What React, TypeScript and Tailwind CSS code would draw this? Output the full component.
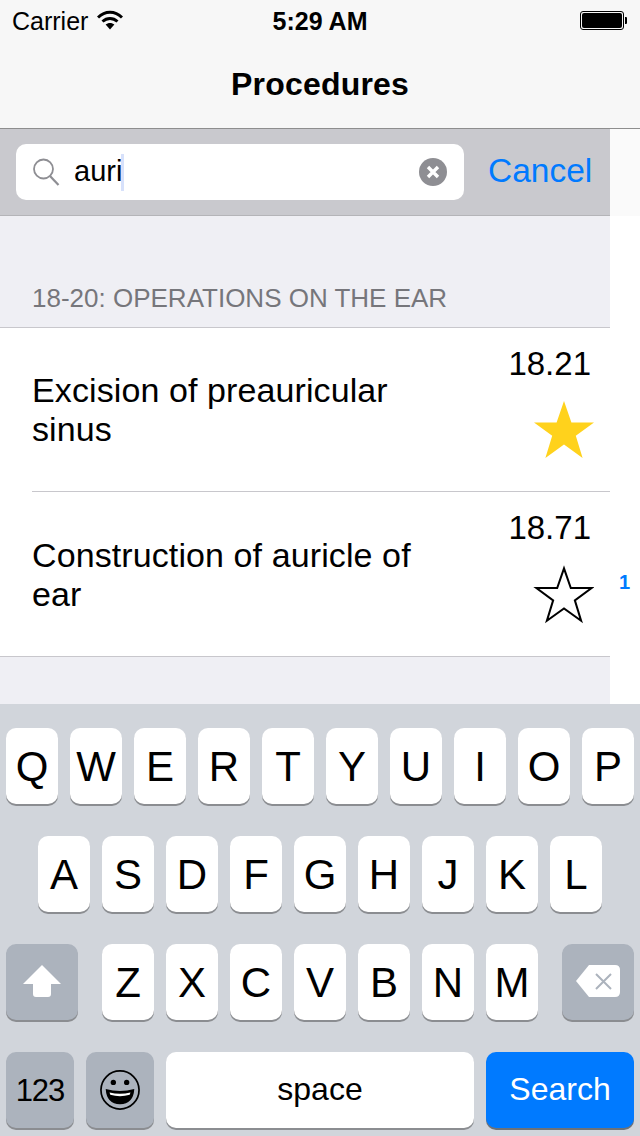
function Key({ label, className = "" }: { label: string; className?: string }) {
  return (
    <div className={`flex h-[76px] w-[52px] items-center justify-center rounded-[10px] bg-white pt-[2px] text-[42px] leading-none text-black shadow-[0_2px_0_#8b8d91] ${className}`}>
      {label}
    </div>
  );
}

function Star({ filled }: { filled: boolean }) {
  const points = "31,2 38.4,23.4 61,23.4 42.8,36.8 49.6,59 31,45.6 12.4,59 19.2,36.8 1,23.4 23.6,23.4";
  return (
    <svg width="62" height="62" viewBox="0 0 62 62" className="block">
      {filled ? (
        <polygon points={points} fill="#ffd21c" transform="translate(1 1)" />
      ) : (
        <polygon
          points={points}
          fill="white"
          stroke="black"
          strokeWidth="2.2"
          strokeLinejoin="miter"
          transform="translate(32 33) scale(0.92) translate(-31 -31)"
        />
      )}
    </svg>
  );
}

function Row({ title, code, filled, border }: { title: string; code: string; filled: boolean; border: boolean }) {
  return (
    <div className="bg-white pl-[32px]">
      <div className={`flex h-[164px] items-stretch pr-[16px] ${border ? "border-b border-[#c8c7cc]" : ""}`}>
        <div className="flex flex-1 items-center pt-[1px]">
          <div className="w-[400px] text-[34px] leading-[39px] tracking-[0.1px] text-black">{title}</div>
        </div>
        <div className="flex w-[100px] flex-col items-end pt-[16px]">
          <div className="pr-[3px] text-[33px] leading-[39px] text-black">{code}</div>
          <div className="mt-[15px]"><Star filled={filled} /></div>
        </div>
      </div>
    </div>
  );
}

export default function App() {
  return (
    <div className="flex h-[1136px] w-[640px] flex-col overflow-hidden bg-white font-['Liberation_Sans',Arial,sans-serif]">
      <header className="h-[129px] shrink-0 border-b border-[#8e8e8e] bg-[#f7f7f7]">
        <div className="relative flex h-[40px] items-center px-[12px] pt-[2px] text-[25px] text-black">
          <span className="leading-none">Carrier</span>
          <svg width="26" height="20" viewBox="0 0 26 20" className="ml-[9px] mb-[2px]">
            <path d="M1 7.5 C8 0.5 18 0.5 25 7.5" fill="none" stroke="black" strokeWidth="3" />
            <path d="M5.5 11.5 C10 7.5 16 7.5 20.5 11.5" fill="none" stroke="black" strokeWidth="3" />
            <path d="M13 19.5 L8.6 14.6 C11 12.4 15 12.4 17.4 14.6 Z" fill="black" />
          </svg>
          <span className="absolute left-0 right-0 text-center text-[25px] font-bold leading-none">5:29 AM</span>
          <div className="absolute left-[580px] top-[11px] flex items-center">
            <div className="h-[19px] w-[44px] rounded-[3px] border border-black p-[1px]">
              <div className="h-full w-full rounded-[2px] bg-black" />
            </div>
            <div className="ml-[1px] h-[7px] w-[2px] rounded-r-[1px] bg-black" />
          </div>
        </div>
        <div className="flex h-[88px] items-center justify-center pb-[1px] text-[32px] font-bold tracking-[0.2px] text-black">Procedures</div>
      </header>

      <main className="flex min-h-0 flex-1">
        <div className="flex w-[610px] flex-col bg-[#efeff4]">
          <div className="flex h-[87px] shrink-0 items-start border-b border-[#b4b4b8] bg-[#c9c9ce] pl-[16px] pt-[15px]">
            <div className="flex h-[56px] w-[448px] items-center rounded-[10px] bg-white pl-[16px] pr-[17px]">
              <svg width="28" height="28" viewBox="0 0 28 28" className="shrink-0">
                <circle cx="11.5" cy="11" r="9.5" fill="none" stroke="#8e8e93" strokeWidth="1.8" />
                <path d="M18 18 L26.5 27" stroke="#8e8e93" strokeWidth="2.2" />
              </svg>
              <span className="ml-[14px] pb-[2px] text-[29px] leading-none text-black">auri</span>
              <span className="-ml-[1px] h-[37px] w-[3px] bg-[#d7e1fb]" />
              <svg width="28" height="28" viewBox="0 0 28 28" className="ml-auto">
                <circle cx="14" cy="14" r="14" fill="#8e8e93" />
                <path d="M9 9 L19 19 M19 9 L9 19" stroke="white" strokeWidth="3.4" />
              </svg>
            </div>
            <div className="ml-[24px] h-[56px] text-[33.5px] leading-[54px] text-[#007aff]">Cancel</div>
          </div>
          <div className="flex h-[111px] shrink-0 items-end pb-[14px] pl-[32px] text-[26px] leading-[30px] text-[#76767b]">18-20: OPERATIONS ON THE EAR</div>
          <div className="border-y border-[#c8c7cc]">
            <Row title="Excision of preauricular sinus" code="18.21" filled border />
            <Row title="Construction of auricle of ear" code="18.71" filled={false} border={false} />
          </div>
        </div>
        <div className="w-[30px]">
          <div className="h-[87px] bg-[#fafafa]" />
          <div className="pl-[9px] pt-[354px] text-[20px] font-bold leading-[24px] text-[#007aff]">1</div>
        </div>
      </main>

      <section className="flex h-[432px] shrink-0 flex-col bg-[#d1d5db] pt-[24px] text-black">
        <div className="flex gap-[12px] pl-[6px]">
          {["Q", "W", "E", "R", "T", "Y", "U", "I", "O", "P"].map((k) => <Key key={k} label={k} />)}
        </div>
        <div className="mt-[32px] flex gap-[12px] pl-[38px]">
          {["A", "S", "D", "F", "G", "H", "J", "K", "L"].map((k) => <Key key={k} label={k} />)}
        </div>
        <div className="mt-[32px] flex pl-[6px]">
          <div className="flex h-[76px] w-[72px] items-center justify-center rounded-[10px] bg-[#acb3bd] pb-[2px] shadow-[0_2px_0_#8b8d91]">
            <svg width="38" height="32" viewBox="0 0 38 32">
              <path d="M19 0 L38 19 L28 19 L28 29 Q28 32 25 32 L13 32 Q10 32 10 29 L10 19 L0 19 Z" fill="white" />
            </svg>
          </div>
          <div className="ml-[24px] flex gap-[12px]">
            {["Z", "X", "C", "V", "B", "N", "M"].map((k) => <Key key={k} label={k} />)}
          </div>
          <div className="ml-[24px] flex h-[76px] w-[72px] items-center justify-center rounded-[10px] bg-[#acb3bd] pb-[2px] shadow-[0_2px_0_#8b8d91]">
            <svg width="44" height="32" viewBox="0 0 44 32">
              <path d="M13 0 L39 0 Q44 0 44 5 L44 27 Q44 32 39 32 L13 32 L0 16 Z" fill="white" />
              <path d="M20 9 L35 24 M35 9 L20 24" stroke="#acb3bd" strokeWidth="2" />
            </svg>
          </div>
        </div>
        <div className="mt-[32px] flex gap-[12px] pl-[6px]">
          <div className="flex h-[76px] w-[68px] items-center justify-center rounded-[10px] bg-[#acb3bd] pt-[2px] text-[31px] tracking-[-1px] shadow-[0_2px_0_#8b8d91]">123</div>
          <div className="flex h-[76px] w-[68px] items-center justify-center rounded-[10px] bg-[#acb3bd] shadow-[0_2px_0_#8b8d91]">
            <svg width="40" height="40" viewBox="0 0 42 42">
              <circle cx="21" cy="21" r="20" fill="none" stroke="black" strokeWidth="1.8" />
              <circle cx="14" cy="13" r="2.8" fill="black" />
              <circle cx="28" cy="13" r="2.8" fill="black" />
              <path d="M6 20 Q21 24 36 20 Q35 36 21 36 Q7 36 6 20 Z" fill="black" />
              <path d="M10 23.5 Q21 26.5 32 23.5 L31.2 26 Q21 29 10.8 26 Z" fill="white" />
            </svg>
          </div>
          <div className="flex h-[76px] w-[308px] items-center justify-center rounded-[10px] bg-white pb-[2px] text-[32px] shadow-[0_2px_0_#8b8d91]">space</div>
          <div className="flex h-[76px] w-[148px] items-center justify-center rounded-[10px] bg-[#007aff] pb-[2px] text-[32px] text-white shadow-[0_2px_0_#6d7278]">Search</div>
        </div>
      </section>
    </div>
  );
}
